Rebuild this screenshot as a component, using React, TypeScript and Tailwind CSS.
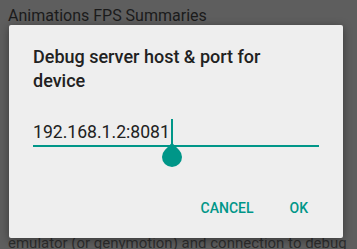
export default function App() {
  return (
    <div className="relative w-[357px] h-[249px] overflow-hidden bg-[#5e5e5e] font-['Roboto',sans-serif]">
      {/* Dimmed settings list behind the dialog */}
      <div className="flex flex-col h-full px-2 leading-6">
        <p className="pt-[4px] text-[16px] text-[#1b1b1b]">Animations FPS Summaries</p>
        <p className="mt-auto mb-[-6px] text-[15px] text-[#2e2e2e] whitespace-nowrap">emulator (or genymotion) and connection to debug</p>
      </div>

      {/* Dialog */}
      <div className="absolute left-[9px] top-[25px] w-[334px] h-[213px] rounded-[2px] bg-[#eeeeee] shadow-[0_2px_10px_rgba(0,0,0,0.4)] flex flex-col pt-5 px-6">
        <h2 className="w-[250px] text-[18px] leading-6 font-medium text-[#212121]">
          Debug server host &amp; port for device
        </h2>

        <div className="mt-[27px] flex items-start">
          <span className="text-[17.6px] leading-6 text-[#212121]">192.168.1.2:8081</span>
          <span className="relative inline-block w-[2px] h-[26px] mt-[-1px] ml-[1px] bg-[#009688]">
            <span className="absolute left-[-9px] top-[28px] w-5 h-5 rounded-full rounded-tl-none rotate-45 bg-[#009688]" />
          </span>
        </div>
        <div className="h-[2px] bg-[#009688]" />

        <div className="mt-[51px] flex justify-end gap-[36px] pr-[11px] text-[14px] leading-5 font-medium text-[#009688]">
          <button>CANCEL</button>
          <button>OK</button>
        </div>
      </div>
    </div>
  );
}
